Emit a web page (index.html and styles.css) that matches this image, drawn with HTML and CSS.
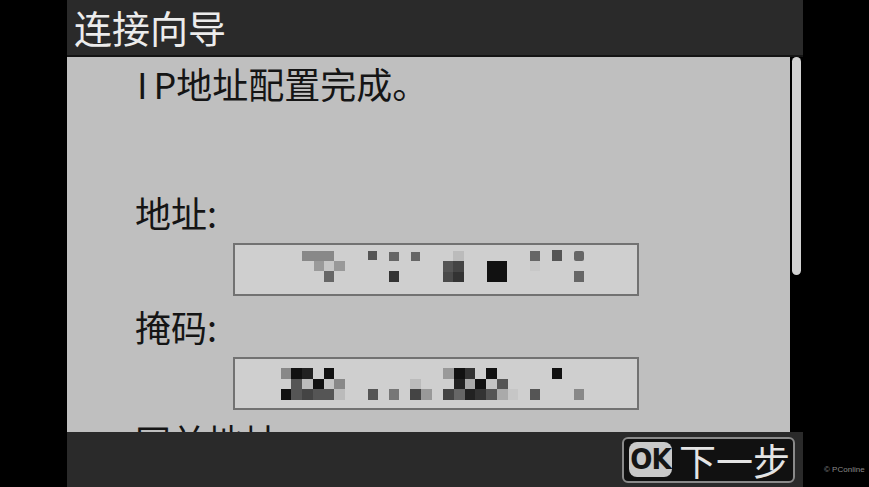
FILE: index.html
```html
<!DOCTYPE html>
<html>
    <head>
        <meta charset="utf-8">
        <title>连接向导</title>
        <link rel="stylesheet" href="styles.css">
    </head>
    <body>
        <div class="screen">
            <div class="titlebar">连接向导</div>
            <div class="main">
                <div class="content">
                    <div class="line intro"><span class="latin">I</span>P地址配置完成。</div>
                    <div class="line label">地址:</div>
                    <div class="field">
                        <!-- pixelated (blurred) address value -->
                        <svg width="402" height="49" viewBox="2 2 402 49">
                            <rect x="69" y="8" width="32" height="10" fill="#888"/>
                            <rect x="81" y="18" width="10" height="10" fill="#9a9a9a"/>
                            <rect x="91" y="18" width="10" height="10" fill="#c6c6c6"/>
                            <rect x="101" y="18" width="11" height="10" fill="#999"/>
                            <rect x="91" y="28" width="10" height="11" fill="#666"/>
                            <rect x="135" y="8" width="9" height="9" fill="#555"/>
                            <rect x="156" y="9" width="10" height="9" fill="#666"/>
                            <rect x="156" y="28" width="10" height="11" fill="#333"/>
                            <rect x="178" y="9" width="9" height="9" fill="#666"/>
                            <rect x="220" y="8" width="11" height="10" fill="#bbb"/>
                            <rect x="210" y="18" width="10" height="11" fill="#555"/>
                            <rect x="220" y="18" width="11" height="11" fill="#444"/>
                            <rect x="210" y="29" width="10" height="10" fill="#4a4a4a"/>
                            <rect x="220" y="29" width="11" height="10" fill="#333"/>
                            <rect x="254" y="18" width="20" height="21" fill="#111"/>
                            <rect x="297" y="8" width="10" height="10" fill="#666"/>
                            <rect x="297" y="18" width="10" height="10" fill="#c8c8c8"/>
                            <rect x="319" y="7" width="10" height="11" fill="#555"/>
                            <rect x="341" y="8" width="10" height="10" rx="2" fill="#666"/>
                            <rect x="341" y="28" width="10" height="11" fill="#666"/>
                        </svg>
                    </div>
                    <div class="line label">掩码:</div>
                    <div class="field">
                        <!-- pixelated (blurred) mask value -->
                        <svg width="402" height="49" viewBox="2 2 402 49">
                            <rect x="48" y="11" width="10" height="11" fill="#888"/>
                            <rect x="58" y="11" width="11" height="11" fill="#111"/>
                            <rect x="69" y="11" width="11" height="11" fill="#222"/>
                            <rect x="91" y="11" width="10" height="11" fill="#111"/>
                            <rect x="58" y="22" width="11" height="10" fill="#555"/>
                            <rect x="69" y="22" width="11" height="10" fill="#bbb"/>
                            <rect x="80" y="22" width="11" height="10" fill="#111"/>
                            <rect x="91" y="22" width="10" height="10" fill="#c4c4c4"/>
                            <rect x="101" y="22" width="11" height="10" fill="#888"/>
                            <rect x="48" y="32" width="10" height="11" fill="#111"/>
                            <rect x="58" y="32" width="11" height="11" fill="#555"/>
                            <rect x="69" y="32" width="11" height="11" fill="#444"/>
                            <rect x="80" y="32" width="11" height="11" fill="#555"/>
                            <rect x="91" y="32" width="10" height="11" fill="#555"/>
                            <rect x="101" y="32" width="11" height="11" fill="#bbb"/>
                            <rect x="135" y="32" width="10" height="11" fill="#555"/>
                            <rect x="156" y="32" width="10" height="11" fill="#777"/>
                            <rect x="177" y="22" width="11" height="10" fill="#bbb"/>
                            <rect x="177" y="32" width="11" height="11" fill="#444"/>
                            <rect x="188" y="32" width="11" height="11" fill="#999"/>
                            <rect x="210" y="11" width="11" height="11" fill="#999"/>
                            <rect x="221" y="11" width="11" height="11" fill="#111"/>
                            <rect x="232" y="11" width="10" height="11" fill="#333"/>
                            <rect x="253" y="11" width="11" height="11" fill="#111"/>
                            <rect x="221" y="22" width="11" height="10" fill="#222"/>
                            <rect x="232" y="22" width="10" height="10" fill="#aaa"/>
                            <rect x="242" y="22" width="11" height="10" fill="#111"/>
                            <rect x="253" y="22" width="11" height="10" fill="#c4c4c4"/>
                            <rect x="264" y="22" width="11" height="10" fill="#555"/>
                            <rect x="210" y="32" width="11" height="11" fill="#444"/>
                            <rect x="221" y="32" width="11" height="11" fill="#666"/>
                            <rect x="232" y="32" width="10" height="11" fill="#222"/>
                            <rect x="242" y="32" width="11" height="11" fill="#333"/>
                            <rect x="253" y="32" width="11" height="11" fill="#555"/>
                            <rect x="264" y="32" width="11" height="11" fill="#aaa"/>
                            <rect x="275" y="32" width="10" height="11" fill="#c6c6c6"/>
                            <rect x="319" y="11" width="10" height="11" fill="#111"/>
                            <rect x="297" y="32" width="10" height="11" fill="#555"/>
                            <rect x="341" y="32" width="10" height="11" fill="#888"/>
                        </svg>
                    </div>
                    <div class="line label">网关地址</div>
                </div>
                <div class="scrollbar"><div class="thumb"></div></div>
            </div>
            <div class="footer">
                <div class="okbutton">
                    <span class="okbadge">OK</span>
                    <span class="oklabel">下一步</span>
                </div>
            </div>
        </div>
        <div class="watermark">© PConline</div>
    </body>
</html>
```
FILE: styles.css
```css
html, body {
    margin: 0;
    height: 100%;
}
body {
    background: #000;
    display: flex;
    font-family: "Noto Sans CJK SC", "Noto Sans", sans-serif;
    overflow: hidden;
}
.screen {
    margin-left: 67px;
    width: 736px;
    height: 487px;
    display: flex;
    flex-direction: column;
}
.titlebar {
    height: 55px;
    border-bottom: 2px solid #141414;
    background: #2a2a2a;
    color: #ececec;
    font-size: 38px;
    line-height: 54px;
    padding-left: 7px;
    white-space: nowrap;
}
.main {
    height: 375px;
    display: flex;
}
.content {
    flex: 1;
    background: #bfbfbf;
    color: #151515;
    padding: 3px 0 0 68px;
    overflow: hidden;
}
.line {
    font-size: 36px;
    line-height: 46px;
    height: 46px;
    white-space: nowrap;
}
.latin {
    letter-spacing: 6px;
    margin-left: 2px;
}
.intro {
    margin-bottom: 83px;
}
.field {
    margin: 8px 0 7px 98px;
    width: 402px;
    height: 49px;
    border: 2px solid #727272;
    background: #cfcfcf;
}
.field svg {
    display: block;
}
.scrollbar {
    width: 13px;
    background: #000;
}
.thumb {
    margin-left: 2px;
    width: 9px;
    height: 218px;
    background: #d2d2d2;
    border-radius: 5px;
}
.footer {
    height: 55px;
    background: #2a2a2a;
    display: flex;
    align-items: center;
    justify-content: flex-end;
    padding-right: 8px;
}
.okbutton {
    display: flex;
    align-items: center;
    height: 46px;
    width: 173px;
    box-sizing: border-box;
    border: 2px solid #8a8a8a;
    border-radius: 6px;
    background: #111;
    padding-left: 5px;
}
.okbadge {
    width: 43px;
    height: 35px;
    border-radius: 8px;
    background: #c9c9c9;
    color: #151515;
    font-family: "DejaVu Sans Condensed", "DejaVu Sans", sans-serif;
    font-weight: bold;
    font-size: 29px;
    line-height: 35px;
    text-align: center;
    letter-spacing: -1px;
}
.oklabel {
    margin-left: 7px;
    color: #e4e4e4;
    font-size: 37px;
    line-height: 40px;
    white-space: nowrap;
}
.watermark {
    align-self: flex-end;
    margin: 0 0 13px 21px;
    color: #8a8a8a;
    font-family: "Liberation Sans", sans-serif;
    font-size: 8px;
    white-space: nowrap;
}
```
